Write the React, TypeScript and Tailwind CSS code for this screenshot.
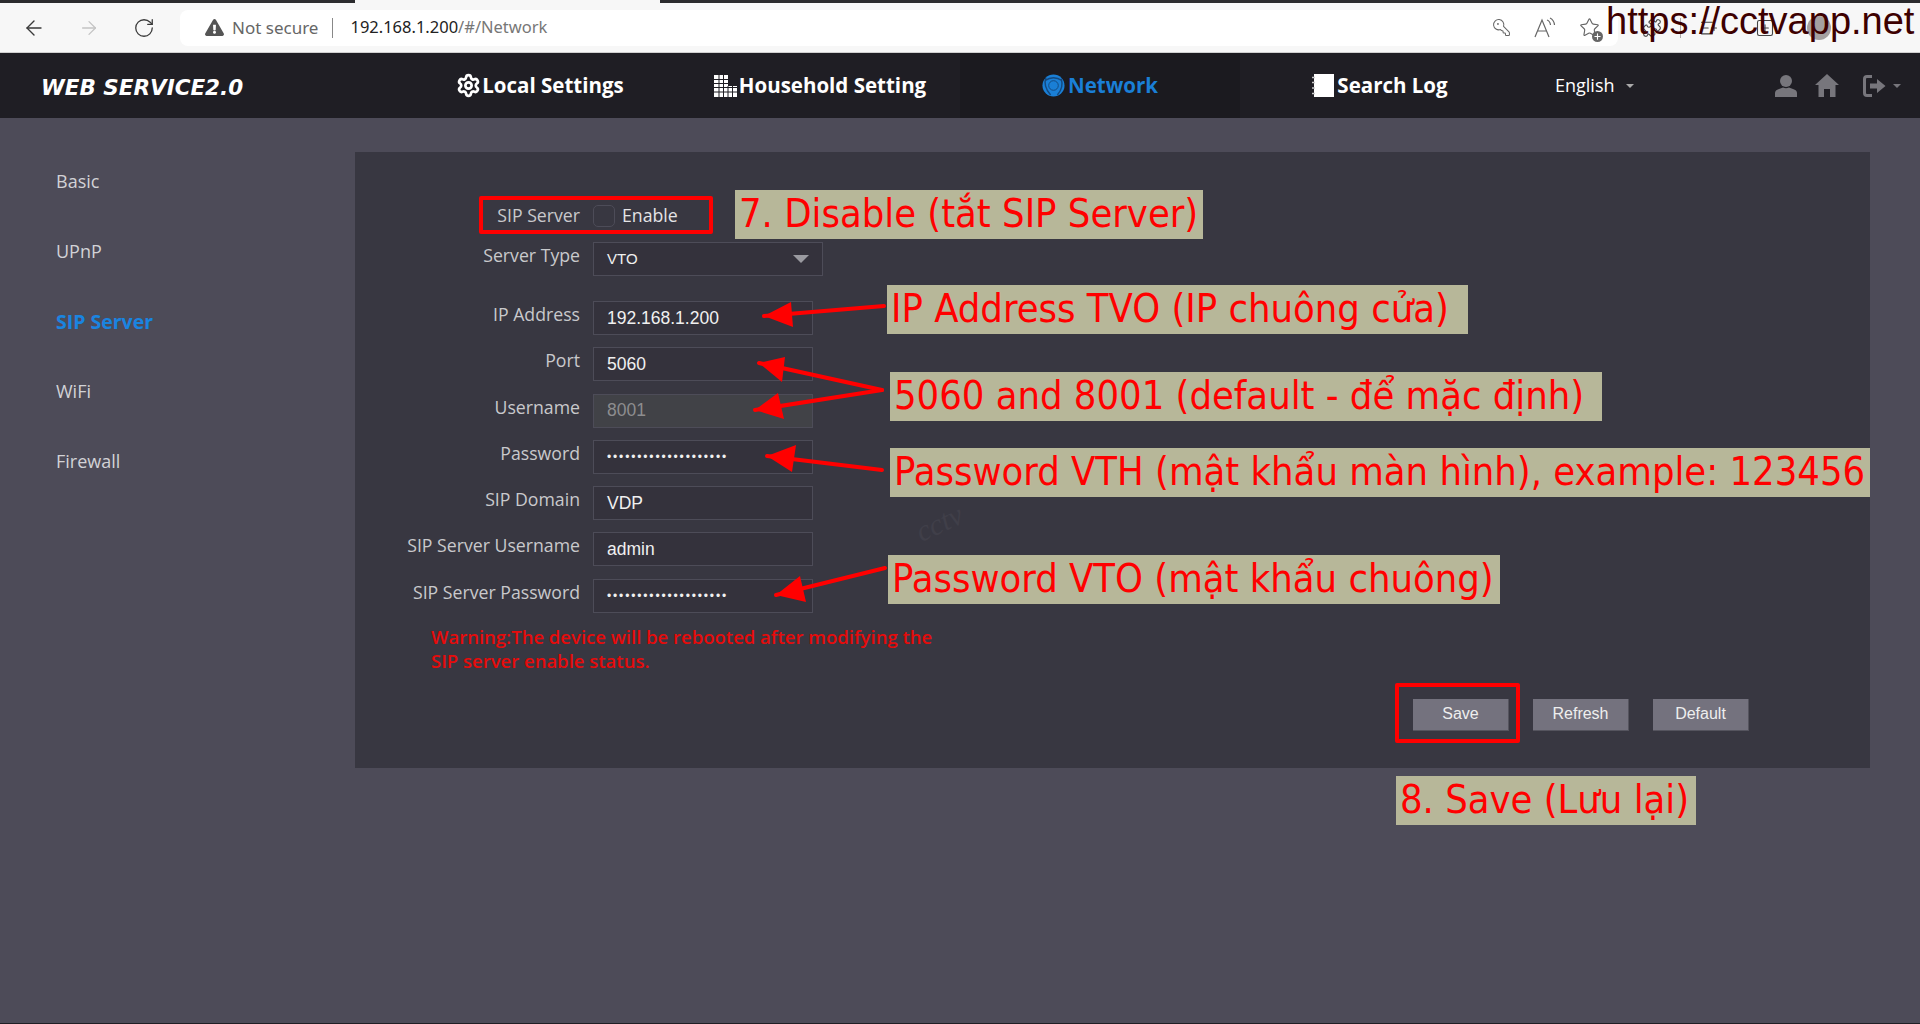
import { FaExclamationTriangle } from 'react-icons/fa'
import { ArrowLeft, ArrowRight, RotateCw, KeyRound, Star, Puzzle, ListPlus, SquarePlus, Settings, Plus } from 'lucide-react'

const fields = [
  { label: 'IP Address', value: '192.168.1.200' },
  { label: 'Port', value: '5060' },
  { label: 'Username', value: '8001', disabled: true },
  { label: 'Password', value: '••••••••••••••••••••', secret: true },
  { label: 'SIP Domain', value: 'VDP' },
  { label: 'SIP Server Username', value: 'admin' },
  { label: 'SIP Server Password', value: '••••••••••••••••••••', secret: true },
]

const sideItems = ['Basic', 'UPnP', 'SIP Server', 'WiFi', 'Firewall']

// tail, tip, wing, wing
const arrows = [
  [884, 306, 764, 316, 791, 302, 793, 327],
  [882, 390, 759, 363, 785, 357, 782, 382],
  [882, 390, 755, 410, 778, 393, 784, 419],
  [882, 470, 767, 456, 796, 445, 792, 472],
  [885, 568, 776, 595, 800, 576, 806, 602],
]

function BrowserBar() {
  return (
    <div className="h-[53px] bg-[#f7f7f7] border-b border-[#d0d0d0] flex flex-col">
      <div className="h-[3px] bg-[#2b2b2e] flex shrink-0">
        <div className="ml-[355px] w-[305px] bg-[#f7f7f7]" />
      </div>
      <div className="flex-1 flex items-center">
        <ArrowLeft className="ml-[22px] text-[#3a3a3a]" size={24} strokeWidth={1.4} />
        <ArrowRight className="ml-[32px] text-[#c4c4c4]" size={22} strokeWidth={1.4} />
        <RotateCw className="ml-[33px] text-[#3a3a3a]" size={22} strokeWidth={1.4} />
        <div className="ml-[25px] w-[1438px] h-[36px] bg-white rounded-[8px] flex items-center pl-[25px] [font-family:'Noto_Sans',sans-serif]">
          <FaExclamationTriangle className="text-[#555]" size={19} />
          <span className="ml-[8px] text-[17px] text-[#666]">Not secure</span>
          <div className="ml-[14px] w-px h-[20px] bg-[#888]" />
          <span className="ml-[17px] text-[16.5px] text-[#222]">192.168.1.200</span>
          <span className="text-[16.5px] text-[#777]">/#/Network</span>
          <div className="ml-auto mr-[18px] flex items-center text-[#666]">
            <KeyRound size={19} strokeWidth={1.3} className="-scale-x-100" />
            <svg className="ml-[22px]" width="24" height="22" viewBox="0 0 24 22" fill="none" stroke="#666" strokeWidth="1.2">
              <path d="M2 20 9 3l7 17M4.500 14h9" />
              <path d="M14 3q3 1 3.500 5M17 1q4 2 4.500 7" />
            </svg>
            <div className="relative ml-[22px]">
              <Star size={21} strokeWidth={1.3} />
              <div className="absolute -right-[3px] -bottom-[4px] w-[11px] h-[11px] rounded-full bg-[#666] flex items-center justify-center">
                <Plus size={9} strokeWidth={3} className="text-white" />
              </div>
            </div>
          </div>
        </div>
        <div className="ml-[24px] flex items-center text-[#444]">
          <Puzzle size={20} strokeWidth={1.3} />
          <div className="ml-[18px] w-px h-[20px] bg-[#aaa]" />
          <ListPlus className="ml-[18px]" size={20} strokeWidth={1.3} />
          <SquarePlus className="ml-[36px]" size={20} strokeWidth={1.3} />
          <div className="ml-[32px] w-[24px] h-[24px] rounded-full bg-[#a5a0a0]" />
        </div>
      </div>
    </div>
  )
}

function BuildingIcon() {
  return (
    <svg width="23" height="22" viewBox="0 0 23 22">
      <rect width="14" height="22" fill="#fff" />
      <rect x="14" y="11" width="9" height="11" fill="#fff" />
      <path d="M0 4.500h14M0 8.500h14M0 12.500h23M0 17h23M5 0v22M9.500 0v22M14 11v11M18.500 11v11" stroke="#1f1e24" strokeWidth="1" />
    </svg>
  )
}

function NetworkIcon() {
  return (
    <svg width="23" height="23" viewBox="0 0 24 24">
      <circle cx="12" cy="12" r="11.500" fill="#1a7fd6" />
      <path d="M4 4q-3 9 5 18M20 5q3 9-4 17M3 7q9-6 18 0" fill="none" stroke="#14497f" strokeWidth="1.500" />
      <circle cx="12" cy="12" r="5" fill="#1a7fd6" stroke="#14497f" strokeWidth="1" />
    </svg>
  )
}

function NotebookIcon() {
  return (
    <svg width="22" height="23" viewBox="0 0 22 23">
      <rect x="2" width="20" height="23" fill="#fff" />
      <path d="M0 3.500h3M0 8.500h3M0 14h3M0 19.500h3" stroke="#ccc" strokeWidth="1.500" />
    </svg>
  )
}

function AppHeader() {
  return (
    <div className="h-[65px] bg-[#1f1e24] flex items-center text-white">
      <div className="w-[400px] pl-[41px] pt-[5px] text-[21.5px] font-bold italic [font-family:'DejaVu_Sans',sans-serif]">
        WEB SERVICE2.0
      </div>
      <div className="flex h-full font-bold text-[20.5px] leading-none">
        <div className="w-[280px] flex items-center justify-center gap-[1px]">
          <Settings size={25} strokeWidth={2.6} />
          <span>Local Settings</span>
        </div>
        <div className="w-[280px] flex items-center justify-center gap-[2px]">
          <BuildingIcon />
          <span>Household Setting</span>
        </div>
        <div className="w-[280px] flex items-center justify-center gap-[3px] bg-[#1b1a1f] text-[#1a7fd6]">
          <NetworkIcon />
          <span>Network</span>
        </div>
        <div className="w-[280px] flex items-center justify-center gap-[3px]">
          <NotebookIcon />
          <span>Search Log</span>
        </div>
      </div>
      <div className="ml-[35px] flex items-center text-[18px]">
        English
        <div className="ml-[11px] w-0 h-0 border-x-[4px] border-x-transparent border-t-[4px] border-t-[#aaa]" />
      </div>
      <div className="ml-[141px] flex items-center text-[#77767c]">
        <svg width="22" height="22" viewBox="0 0 22 22" fill="currentColor">
          <circle cx="11" cy="6" r="6" />
          <path d="M0 22v-4q0-3 4-4l4-1.500q3 1.500 6 0l4 1.500q4 1 4 4v4z" />
        </svg>
        <svg className="ml-[18px]" width="24" height="23" viewBox="0 0 24 23" fill="currentColor">
          <path d="M12 0 24 11h-3.500v12h-5.500v-8h-6v8H3.500V11H0z" />
        </svg>
        <svg className="ml-[24px]" width="23" height="22" viewBox="0 0 23 22" fill="none" stroke="currentColor">
          <path d="M9 1.500H4Q1.500 1.500 1.500 4v14q0 2.500 2.500 2.500h5" strokeWidth="3" />
          <path d="M7 8.500h7V4l8.500 7-8.500 7v-4.500H7z" fill="currentColor" strokeWidth="0" />
        </svg>
        <div className="ml-[7px] w-0 h-0 border-x-[4px] border-x-transparent border-t-[4px] border-t-[#77767c]" />
      </div>
    </div>
  )
}

function Sidebar() {
  return (
    <div className="w-[355px] pl-[56px] pt-[17px] flex flex-col gap-[45px] text-[18px] leading-[25px] text-[#d2d2d6]">
      {sideItems.map(item => (
        <div key={item} className={item === 'SIP Server' ? 'font-bold text-[19.5px] text-[#1a84e0]' : ''}>{item}</div>
      ))}
    </div>
  )
}

function Field({ label, value, disabled, secret }: { label: string; value: string; disabled?: boolean; secret?: boolean }) {
  return (
    <div className="flex h-[34px]">
      <div className="w-[225px] text-right text-[#c9c9cc] text-[17.7px] leading-[26px]">{label}</div>
      <div className={`ml-[13px] w-[220px] border border-[#4d4c58] pl-[13px] flex items-center [font-family:'Liberation_Sans',sans-serif] ${
        disabled ? 'bg-[#414247] text-[#8d8d8f]' : 'bg-[#34323c] text-[#f0f0f0]'
      } ${secret ? 'text-[12px] tracking-[1.85px]' : 'text-[17.5px]'}`}>
        {value}
      </div>
    </div>
  )
}

function Panel() {
  return (
    <div className="w-[1515px] h-[616px] bg-[#383741] pt-[52px] relative">
      <div className="flex items-center h-[22px]">
        <div className="w-[225px] text-right text-[#c9c9cc] text-[17.7px]">SIP Server</div>
        <div className="ml-[13px] mt-[2px] w-[22px] h-[22px] rounded-[5px] border border-[#4d4c58]" />
        <div className="ml-[7px] text-[17.7px] text-[#e4e4e6]">Enable</div>
      </div>
      <div className="flex h-[34px] mt-[16px]">
        <div className="w-[225px] text-right text-[#c9c9cc] text-[17.7px] leading-[26px]">Server Type</div>
        <div className="ml-[13px] w-[230px] border border-[#4d4c58] bg-[#34323c] pl-[13px] pr-[13px] flex items-center justify-between [font-family:'Liberation_Sans',sans-serif] text-[15px] text-[#f0f0f0]">
          VTO
          <div className="w-0 h-0 border-x-[8px] border-x-transparent border-t-[8px] border-t-[#9a9aa0]" />
        </div>
      </div>
      <div className="flex flex-col gap-[12.3px] mt-[25px]">
        {fields.map(f => <Field key={f.label} {...f} />)}
      </div>
      <div className="ml-[76px] mt-[12px] w-[510px] text-[18.5px] leading-[24px] font-semibold text-[#e60b0b]">
        Warning:The device will be rebooted after modifying the SIP server enable status.
      </div>
      <div className="flex gap-[24px] ml-[1058px] mt-[26px] [font-family:'Liberation_Sans',sans-serif] text-[16px] text-[#eeeeee]">
        {['Save', 'Refresh', 'Default'].map(b => (
          <button key={b} className="w-[96px] h-[32px] bg-[#74727e] border-b border-r border-[#55545e]">{b}</button>
        ))}
      </div>
    </div>
  )
}

function Note({ className, text }: { className: string; text: string }) {
  return (
    <div className={`absolute h-[49px] bg-[#b7b799] text-[#ff0000] text-[39.5px] leading-[46px] whitespace-nowrap pl-[4px] [font-family:'DejaVu_Sans',sans-serif] [font-stretch:condensed] ${className}`}>
      {text}
    </div>
  )
}

export default function App() {
  return (
    <div className="relative w-[1920px] h-[1024px] overflow-hidden bg-[#4d4b58] border-b border-[#1f1e24] [font-family:'Open_Sans',sans-serif]">
      <BrowserBar />
      <AppHeader />
      <div className="flex pt-[34px]">
        <Sidebar />
        <Panel />
      </div>

      {/* annotations drawn on top of the screenshot */}
      <div className="absolute left-[915px] top-[508px] -rotate-[25deg] text-[30px] leading-none italic text-[#403f49] [font-family:'Liberation_Serif',serif]">
        cctv
      </div>
      <div className="absolute left-[1606px] top-[0px] text-[38px] leading-[42px] text-[#3d0000] [font-family:'Liberation_Sans',sans-serif]">
        https://cctvapp.net
      </div>
      <div className="absolute left-[479px] top-[196px] w-[234px] h-[38px] border-[4px] border-[#ff0000] rounded-[2px]" />
      <div className="absolute left-[1395px] top-[683px] w-[125px] h-[60px] border-[4px] border-[#ff0000] rounded-[2px]" />
      <Note className="left-[735px] top-[190px] w-[468px]" text="7. Disable (tắt SIP Server)" />
      <Note className="left-[887px] top-[285px] w-[581px]" text="IP Address TVO (IP chuông cửa)" />
      <Note className="left-[890px] top-[372px] w-[712px]" text="5060 and 8001 (default - để mặc định)" />
      <Note className="left-[890px] top-[448px] w-[980px]" text="Password VTH (mật khẩu màn hình), example: 123456" />
      <Note className="left-[888px] top-[555px] w-[612px]" text="Password VTO (mật khẩu chuông)" />
      <Note className="left-[1396px] top-[776px] w-[300px]" text="8. Save (Lưu lại)" />
      <svg className="absolute left-0 top-0" width="1920" height="1024">
        {arrows.map((a, i) => (
          <g key={i}>
            <line x1={a[0]} y1={a[1]} x2={a[2]} y2={a[3]} stroke="#ff0000" strokeWidth="4" strokeLinecap="round" />
            <polygon points={`${a[2]},${a[3]} ${a[4]},${a[5]} ${a[6]},${a[7]}`} fill="#ff0000" />
          </g>
        ))}
      </svg>
    </div>
  )
}
